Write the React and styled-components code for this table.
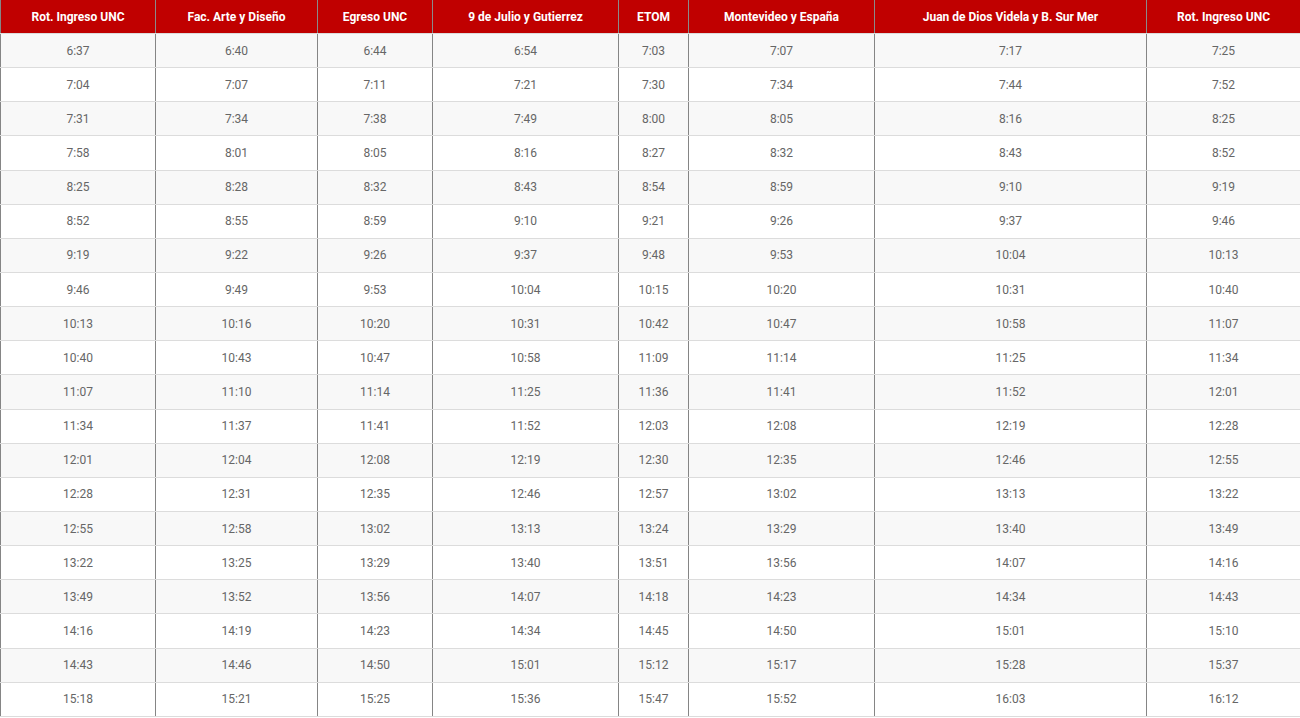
import styled, { createGlobalStyle } from 'styled-components';

const stops = [
  { name: 'Rot. Ingreso UNC', width: 155 },
  { name: 'Fac. Arte y Diseño', width: 162 },
  { name: 'Egreso UNC', width: 115 },
  { name: '9 de Julio y Gutierrez', width: 186 },
  { name: 'ETOM', width: 70 },
  { name: 'Montevideo y España', width: 186 },
  { name: 'Juan de Dios Videla y B. Sur Mer', width: 272 },
  { name: 'Rot. Ingreso UNC', width: 154 },
];

const rows = [
  ['6:37', '6:40', '6:44', '6:54', '7:03', '7:07', '7:17', '7:25'],
  ['7:04', '7:07', '7:11', '7:21', '7:30', '7:34', '7:44', '7:52'],
  ['7:31', '7:34', '7:38', '7:49', '8:00', '8:05', '8:16', '8:25'],
  ['7:58', '8:01', '8:05', '8:16', '8:27', '8:32', '8:43', '8:52'],
  ['8:25', '8:28', '8:32', '8:43', '8:54', '8:59', '9:10', '9:19'],
  ['8:52', '8:55', '8:59', '9:10', '9:21', '9:26', '9:37', '9:46'],
  ['9:19', '9:22', '9:26', '9:37', '9:48', '9:53', '10:04', '10:13'],
  ['9:46', '9:49', '9:53', '10:04', '10:15', '10:20', '10:31', '10:40'],
  ['10:13', '10:16', '10:20', '10:31', '10:42', '10:47', '10:58', '11:07'],
  ['10:40', '10:43', '10:47', '10:58', '11:09', '11:14', '11:25', '11:34'],
  ['11:07', '11:10', '11:14', '11:25', '11:36', '11:41', '11:52', '12:01'],
  ['11:34', '11:37', '11:41', '11:52', '12:03', '12:08', '12:19', '12:28'],
  ['12:01', '12:04', '12:08', '12:19', '12:30', '12:35', '12:46', '12:55'],
  ['12:28', '12:31', '12:35', '12:46', '12:57', '13:02', '13:13', '13:22'],
  ['12:55', '12:58', '13:02', '13:13', '13:24', '13:29', '13:40', '13:49'],
  ['13:22', '13:25', '13:29', '13:40', '13:51', '13:56', '14:07', '14:16'],
  ['13:49', '13:52', '13:56', '14:07', '14:18', '14:23', '14:34', '14:43'],
  ['14:16', '14:19', '14:23', '14:34', '14:45', '14:50', '15:01', '15:10'],
  ['14:43', '14:46', '14:50', '15:01', '15:12', '15:17', '15:28', '15:37'],
  ['15:18', '15:21', '15:25', '15:36', '15:47', '15:52', '16:03', '16:12'],
];

function App() {
  return (
    <>
      <GlobalStyle />
      <Schedule>
        <colgroup>
          {stops.map((stop, i) => (
            <col key={i} style={{ width: stop.width }} />
          ))}
        </colgroup>
        <thead>
          <tr>
            {stops.map((stop, i) => (
              <HeadCell key={i}>{stop.name}</HeadCell>
            ))}
          </tr>
        </thead>
        <tbody>
          {rows.map((row, r) => (
            <Row key={r} $striped={r % 2 === 0}>
              {row.map((time, c) => (
                <Cell key={c}>{time}</Cell>
              ))}
            </Row>
          ))}
        </tbody>
      </Schedule>
    </>
  );
}

export default App;

const GlobalStyle = createGlobalStyle`
  body {
    margin: 0;
    background: #fff;
    font-family: Roboto, "Liberation Sans", sans-serif;
  }
`;

const Schedule = styled.table`
  width: 1300px;
  table-layout: fixed;
  border-collapse: collapse;
  border-left: 1px solid #858585;
  border-bottom: 1px solid #858585;
  font-family: Roboto, "Liberation Sans", sans-serif;
  font-size: 12px;
`;

const HeadCell = styled.th`
  height: 33.5px;
  padding: 0 6px;
  box-sizing: border-box;
  background: #c00000;
  color: #fff;
  font-weight: 700;
  text-align: center;
  border-right: 1px solid #8a8a8a;
  border-bottom: 1px solid #dcdcdc;
  white-space: nowrap;
`;

const Row = styled.tr`
  background: ${({ $striped }) => ($striped ? '#f8f8f8' : '#ffffff')};
`;

const Cell = styled.td`
  height: 34.15px;
  padding: 0;
  box-sizing: border-box;
  text-align: center;
  color: #666;
  border-right: 1px solid #858585;
  border-bottom: 1px solid #dcdcdc;
`;
